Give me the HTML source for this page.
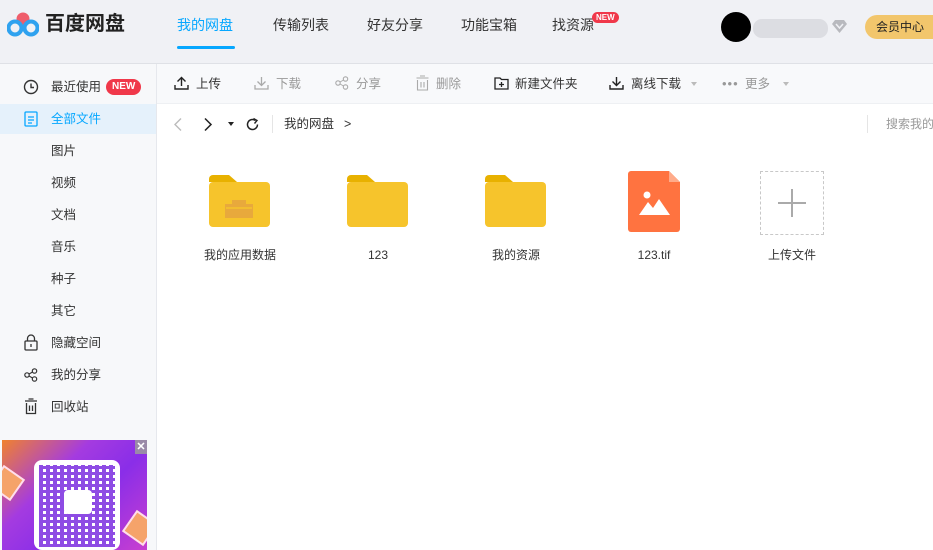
<!DOCTYPE html>
<html><head><meta charset="utf-8"><style>
*{margin:0;padding:0;box-sizing:border-box}
body{width:933px;height:550px;overflow:hidden;background:#fff;font-family:"Liberation Sans","Noto Sans CJK SC",sans-serif;font-size:13px;line-height:16px;color:#333;position:relative}
.a{position:absolute;white-space:nowrap}
#hdr{position:absolute;left:0;top:0;width:933px;height:64px;background:#f0f1f5;border-bottom:1px solid #dfe1e6}
#side{position:absolute;left:0;top:64px;width:157px;height:486px;background:#f7f8fa;border-right:1px solid #e6e8ed}
#tb{position:absolute;left:157px;top:64px;width:776px;height:40px;background:#f8f9fb;border-bottom:1px solid #eef0f3}
.nav{font-size:14px;color:#333;top:17px}
.si{left:51px;font-size:12.5px;color:#333}
.t{font-size:12.5px;top:76px}
.g{color:#999}
.lbl{top:247px;font-size:12px;color:#333;width:120px;text-align:center}
</style></head><body>
<div id="hdr"></div>
<svg class="a" style="left:7px;top:11px" width="32" height="26" viewBox="0 0 32 26">
<circle cx="16" cy="8" r="6.5" fill="#ef5d6b"/><circle cx="8" cy="17" r="6.5" fill="none" stroke="#2fa2ef" stroke-width="4"/><circle cx="24" cy="17" r="6.5" fill="none" stroke="#2fa2ef" stroke-width="4"/></svg>
<div class="a" style="left:45px;top:11px;font-size:20px;line-height:26px;font-weight:bold;color:#222">百度网盘</div>
<div class="a nav" style="left:177px;color:#06a7ff">我的网盘</div>
<div class="a" style="left:177px;top:46px;width:58px;height:3px;background:#06a7ff;border-radius:2px"></div>
<div class="a nav" style="left:273px">传输列表</div>
<div class="a nav" style="left:367px">好友分享</div>
<div class="a nav" style="left:461px">功能宝箱</div>
<div class="a nav" style="left:552px">找资源</div>
<div class="a" style="left:592px;top:12px;background:#f0384a;color:#fff;font-size:8px;line-height:11px;border-radius:6px;padding:0 4px;font-weight:bold">NEW</div>
<div class="a" style="left:721px;top:12px;width:30px;height:30px;border-radius:50%;background:#000"></div>
<div class="a" style="left:753px;top:19px;width:75px;height:19px;border-radius:9px;background:#dcdde2"></div>
<svg class="a" style="left:831px;top:19px" width="17" height="15" viewBox="0 0 17 15"><path d="M1 5 L4 1 H13 L16 5 L8.5 14 Z" fill="#b8b9be"/><path d="M5 5 L8.5 9 L12 5" stroke="#f0f1f5" stroke-width="1.5" fill="none"/></svg>
<div class="a" style="left:865px;top:15px;width:80px;height:24px;border-radius:12px;background:#f2c66c;font-size:12px;line-height:24px;padding-left:11px;color:#222">会员中心</div>

<div id="side"></div>
<div class="a" style="left:0;top:104px;width:156px;height:30px;background:#e5f1fb"></div>
<svg class="a" style="left:23px;top:79px" width="16" height="16" viewBox="0 0 16 16"><circle cx="8" cy="8" r="6.5" fill="none" stroke="#333" stroke-width="1.4"/><path d="M8 4.5V8.5H11" fill="none" stroke="#333" stroke-width="1.4"/></svg>
<div class="a si" style="top:79px">最近使用</div>
<div class="a" style="left:106px;top:79px;background:#f0384a;color:#fff;font-size:10px;line-height:16px;border-radius:8px;padding:0 6px;font-weight:bold">NEW</div>
<svg class="a" style="left:24px;top:111px" width="14" height="16" viewBox="0 0 14 16"><rect x="1" y="1" width="12" height="14" rx="1" fill="none" stroke="#06a7ff" stroke-width="1.3"/><path d="M4 6H10M4 9H10M4 12H8" stroke="#06a7ff" stroke-width="1.2"/></svg>
<div class="a si" style="top:111px;color:#06a7ff">全部文件</div>
<div class="a si" style="top:143px">图片</div>
<div class="a si" style="top:175px">视频</div>
<div class="a si" style="top:207px">文档</div>
<div class="a si" style="top:239px">音乐</div>
<div class="a si" style="top:271px">种子</div>
<div class="a si" style="top:303px">其它</div>
<svg class="a" style="left:24px;top:334px" width="14" height="17" viewBox="0 0 14 17"><rect x="1" y="7" width="12" height="9" rx="1" fill="none" stroke="#333" stroke-width="1.3"/><path d="M3.5 7V4.5a3.5 3.5 0 0 1 7 0V7M7 10v3" fill="none" stroke="#333" stroke-width="1.3"/></svg>
<div class="a si" style="top:335px">隐藏空间</div>
<svg class="a" style="left:24px;top:368px" width="14" height="14" viewBox="0 0 14 14"><circle cx="3" cy="7" r="2.2" fill="none" stroke="#333" stroke-width="1.2"/><circle cx="10.5" cy="3" r="2.2" fill="none" stroke="#333" stroke-width="1.2"/><circle cx="10.5" cy="11" r="2.2" fill="none" stroke="#333" stroke-width="1.2"/><path d="M5 6L8.6 4M5 8L8.6 10" stroke="#333" stroke-width="1.1"/></svg>
<div class="a si" style="top:367px">我的分享</div>
<svg class="a" style="left:24px;top:398px" width="14" height="17" viewBox="0 0 14 17"><path d="M1 3H13M4.5 1H9.5M2.5 5V15.5H11.5V5M5.5 7.5V13M8.5 7.5V13" fill="none" stroke="#333" stroke-width="1.3"/></svg>
<div class="a si" style="top:399px">回收站</div>
<div class="a" style="left:2px;top:440px;width:145px;height:110px;background:linear-gradient(135deg,#f0822e 0%,#a43be0 35%,#8a2ee8 60%,#c93fd0 100%);overflow:hidden">
<div class="a" style="left:-8px;top:30px;width:26px;height:26px;background:#f5a36a;border:2px solid #fde;transform:rotate(35deg)"></div>
<div class="a" style="left:125px;top:75px;width:26px;height:26px;background:#f5a36a;border:2px solid #fde;transform:rotate(35deg)"></div>
<div class="a" style="left:32px;top:20px;width:86px;height:90px;background:#fff;border-radius:8px"></div>
<div class="a" style="left:37px;top:25px;width:76px;height:82px;background:repeating-linear-gradient(90deg,#7b2de0 0 4px,transparent 4px 7px),repeating-linear-gradient(0deg,#7b2de0 0 3px,#fff 3px 6px);opacity:.85"></div>
<div class="a" style="left:62px;top:50px;width:28px;height:24px;background:#fff;border-radius:4px"></div>
<div class="a" style="left:133px;top:0;width:12px;height:14px;background:#9a8aa8;color:#fff;font-size:11px;text-align:center;line-height:14px;font-weight:bold">✕</div>
</div>

<div id="tb"></div>
<svg class="a" style="left:174px;top:76px" width="15" height="14" viewBox="0 0 15 14"><path d="M7.5 10V1.5M3.5 5.5L7.5 1.5L11.5 5.5M1 9V13H14V9" fill="none" stroke="#222" stroke-width="1.4"/></svg>
<div class="a t" style="left:196px">上传</div>
<svg class="a" style="left:254px;top:76px" width="15" height="14" viewBox="0 0 15 14"><path d="M7.5 1V9.5M3.5 5.5L7.5 9.5L11.5 5.5M1 9V13H14V9" fill="none" stroke="#aaa" stroke-width="1.3"/></svg>
<div class="a t g" style="left:276px">下载</div>
<svg class="a" style="left:335px;top:76px" width="14" height="14" viewBox="0 0 14 14"><circle cx="3" cy="7" r="2.2" fill="none" stroke="#aaa" stroke-width="1.1"/><circle cx="10.5" cy="3" r="2.2" fill="none" stroke="#aaa" stroke-width="1.1"/><circle cx="10.5" cy="11" r="2.2" fill="none" stroke="#aaa" stroke-width="1.1"/><path d="M5 6L8.6 4M5 8L8.6 10" stroke="#aaa"/></svg>
<div class="a t g" style="left:356px">分享</div>
<svg class="a" style="left:416px;top:75px" width="13" height="16" viewBox="0 0 13 16"><path d="M0.5 3H12.5M4 1H9M1.5 5V15H11.5V5M5 7V12.5M8 7V12.5" fill="none" stroke="#aaa" stroke-width="1.1"/></svg>
<div class="a t g" style="left:436px">删除</div>
<svg class="a" style="left:494px;top:77px" width="15" height="13" viewBox="0 0 15 13"><path d="M1 1H6L7.5 2.5H14V12H1Z" fill="none" stroke="#222" stroke-width="1.3"/><path d="M7.5 5V10M5 7.5H10" stroke="#222" stroke-width="1.3"/></svg>
<div class="a t" style="left:515px">新建文件夹</div>
<svg class="a" style="left:609px;top:76px" width="15" height="14" viewBox="0 0 15 14"><path d="M7.5 1V9.5M3.5 5.5L7.5 9.5L11.5 5.5M1 9V13H14V9" fill="none" stroke="#222" stroke-width="1.4"/></svg>
<div class="a t" style="left:631px">离线下载</div>
<div class="a" style="left:691px;top:82px;border:3.5px solid transparent;border-top:4px solid #bbb"></div>
<div class="a g" style="left:722px;top:76px;font-size:13px;letter-spacing:1px">•••</div>
<div class="a t g" style="left:745px">更多</div>
<div class="a" style="left:783px;top:82px;border:3.5px solid transparent;border-top:4px solid #bbb"></div>

<svg class="a" style="left:173px;top:117px" width="10" height="15" viewBox="0 0 10 15"><path d="M8 1.5L2 7.5L8 13.5" fill="none" stroke="#bbb" stroke-width="1.4"/></svg>
<svg class="a" style="left:203px;top:117px" width="10" height="15" viewBox="0 0 10 15"><path d="M2 1.5L8 7.5L2 13.5" fill="none" stroke="#222" stroke-width="1.5"/></svg>
<div class="a" style="left:228px;top:122px;border:3.5px solid transparent;border-top:4px solid #222"></div>
<svg class="a" style="left:245px;top:117px" width="15" height="15" viewBox="0 0 15 15"><path d="M12.5 7.5A5 5 0 1 1 10.5 3.5" fill="none" stroke="#222" stroke-width="1.5"/><path d="M8.5 1.5L12 3.5L9.5 6.5" fill="none" stroke="#222" stroke-width="1.4"/></svg>
<div class="a" style="left:272px;top:115px;width:1px;height:18px;background:#e5e5e5"></div>
<div class="a" style="left:284px;top:116px;font-size:12.5px">我的网盘</div>
<div class="a" style="left:344px;top:116px;font-size:12.5px">&gt;</div>
<div class="a" style="left:867px;top:115px;width:1px;height:18px;background:#e5e5e5"></div>
<div class="a g" style="left:886px;top:116px;font-size:12px">搜索我的</div>

<svg class="a" style="left:209px;top:175px" width="62" height="52" viewBox="0 0 62 52"><path d="M0 4a4 4 0 0 1 4-4H20l8 7H0Z" fill="#e8b100"/><rect x="0" y="7" width="61" height="45" rx="4" fill="#f6c42c"/><path d="M17 30H43V42H17ZM24 30V26H36V30" fill="#e8a93c" stroke="#e8a93c" stroke-width="2"/><path d="M17 33H43" stroke="#f6c42c" stroke-width="1.5"/></svg>
<svg class="a" style="left:347px;top:175px" width="62" height="52" viewBox="0 0 62 52"><path d="M0 4a4 4 0 0 1 4-4H20l8 7H0Z" fill="#e8b100"/><rect x="0" y="7" width="61" height="45" rx="4" fill="#f6c42c"/></svg>
<svg class="a" style="left:485px;top:175px" width="62" height="52" viewBox="0 0 62 52"><path d="M0 4a4 4 0 0 1 4-4H20l8 7H0Z" fill="#e8b100"/><rect x="0" y="7" width="61" height="45" rx="4" fill="#f6c42c"/></svg>
<svg class="a" style="left:628px;top:171px" width="53" height="61" viewBox="0 0 53 61"><path d="M3 0H41L52 11V58a3 3 0 0 1-3 3H3a3 3 0 0 1-3-3V3a3 3 0 0 1 3-3Z" fill="#ff7340"/><path d="M41 0V11H52Z" fill="#ffab8a"/><circle cx="19" cy="24" r="3.5" fill="#fff"/><path d="M11 44L20 31L25 37L31 28L42 44Z" fill="#fff"/></svg>
<div class="a" style="left:760px;top:171px;width:64px;height:64px;border:1px dashed #c8c8c8"></div>
<div class="a" style="left:778px;top:202px;width:28px;height:1.5px;background:#aaa"></div>
<div class="a" style="left:791px;top:189px;width:1.5px;height:28px;background:#aaa"></div>

<div class="a lbl" style="left:180px">我的应用数据</div>
<div class="a lbl" style="left:318px">123</div>
<div class="a lbl" style="left:456px">我的资源</div>
<div class="a lbl" style="left:594px">123.tif</div>
<div class="a lbl" style="left:732px">上传文件</div>
</body></html>
